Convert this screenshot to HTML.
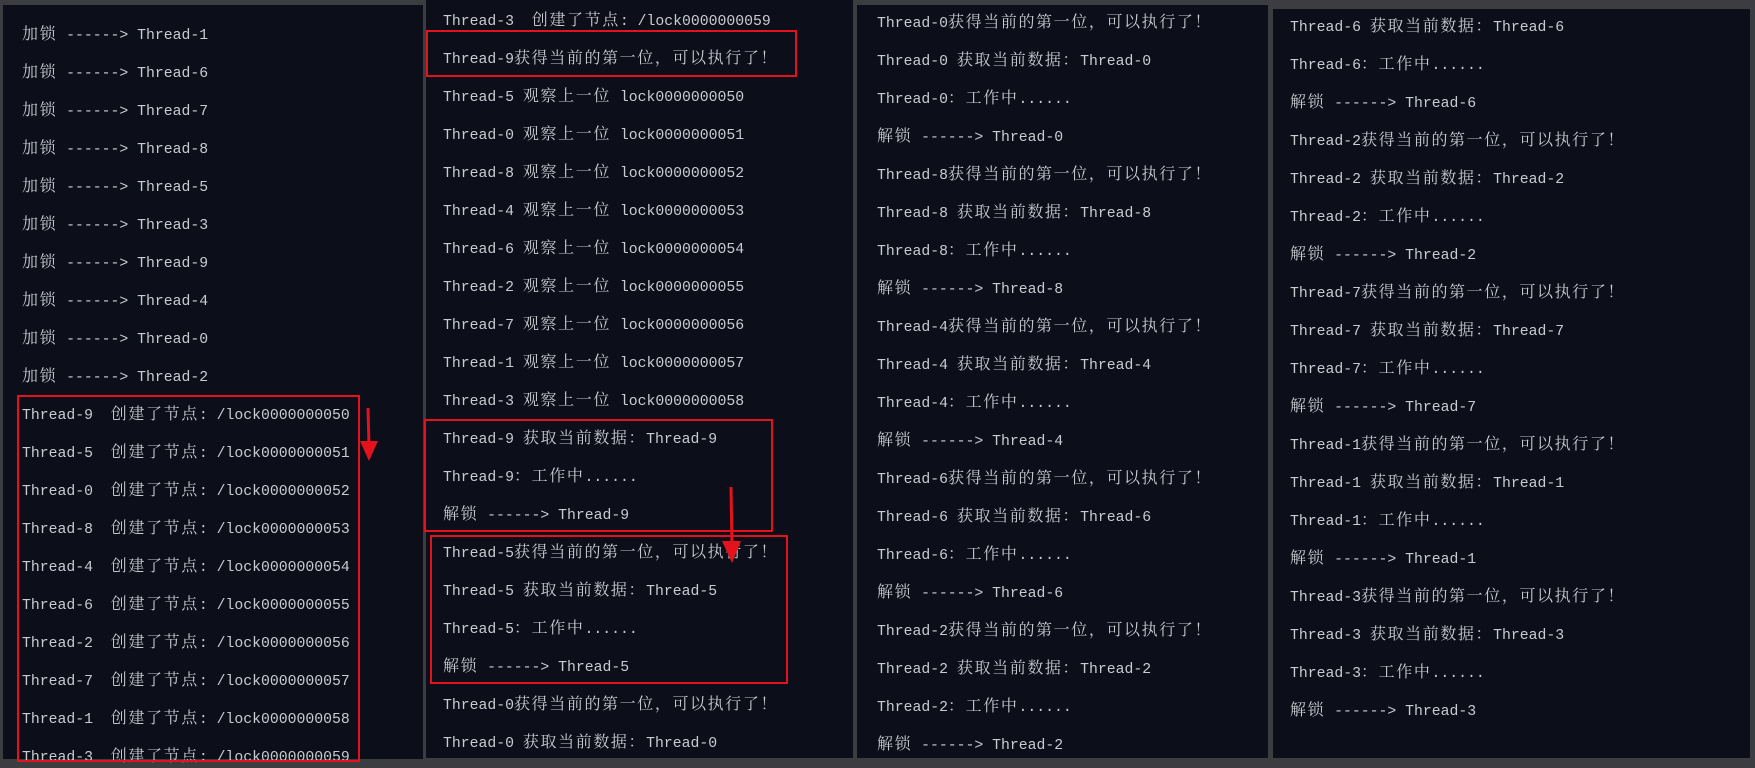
<!DOCTYPE html>
<html><head><meta charset="utf-8"><style>
html,body{margin:0;padding:0;width:1755px;height:766px;overflow:hidden;background:#3c3d40;}
.p{position:absolute;background:#0c0f1a;}
.r{position:absolute;white-space:pre;height:20px;line-height:20px;color:#c8cbd0;font-family:"Liberation Mono",monospace;font-size:14.8px;}
.c{font-family:"Noto Serif CJK SC","Noto Sans CJK SC",serif;font-size:16px;letter-spacing:1.6px;}
.b{position:absolute;border:2px solid #e3121c;box-sizing:border-box;}
</style></head><body>
<div class="p" style="left:3px;top:5px;width:420px;height:754px"></div>
<div class="p" style="left:426px;top:0px;width:427px;height:758px"></div>
<div class="p" style="left:857px;top:5px;width:411px;height:753px"></div>
<div class="p" style="left:1273px;top:9px;width:477px;height:749px"></div>
<div id="t"></div>
<div class="b" style="left:17px;top:395px;width:343px;height:367px"></div>
<div class="b" style="left:426px;top:30px;width:371px;height:47px"></div>
<div class="b" style="left:424px;top:419px;width:349px;height:113px"></div>
<div class="b" style="left:430px;top:535px;width:358px;height:149px"></div>
<svg style="position:absolute;left:0;top:0" width="1755" height="766">
<path d="M368 408 L369 446" stroke="#e3121c" stroke-width="3"/>
<path d="M360 441 L378 441 L369 461 Z" fill="#e3121c"/>
<path d="M731 487 L732 548" stroke="#e3121c" stroke-width="3"/>
<path d="M722 541 L741 541 L732 563 Z" fill="#e3121c"/>
</svg>
<script>
var cols=[
[22,33,["加锁 ------> Thread-1","加锁 ------> Thread-6","加锁 ------> Thread-7","加锁 ------> Thread-8","加锁 ------> Thread-5","加锁 ------> Thread-3","加锁 ------> Thread-9","加锁 ------> Thread-4","加锁 ------> Thread-0","加锁 ------> Thread-2",
"Thread-9  创建了节点: /lock0000000050","Thread-5  创建了节点: /lock0000000051","Thread-0  创建了节点: /lock0000000052","Thread-8  创建了节点: /lock0000000053","Thread-4  创建了节点: /lock0000000054","Thread-6  创建了节点: /lock0000000055","Thread-2  创建了节点: /lock0000000056","Thread-7  创建了节点: /lock0000000057","Thread-1  创建了节点: /lock0000000058","Thread-3  创建了节点: /lock0000000059"]],
[443,19,["Thread-3  创建了节点: /lock0000000059","Thread-9获得当前的第一位，可以执行了！","Thread-5 观察上一位 lock0000000050","Thread-0 观察上一位 lock0000000051","Thread-8 观察上一位 lock0000000052","Thread-4 观察上一位 lock0000000053","Thread-6 观察上一位 lock0000000054","Thread-2 观察上一位 lock0000000055","Thread-7 观察上一位 lock0000000056","Thread-1 观察上一位 lock0000000057","Thread-3 观察上一位 lock0000000058",
"Thread-9 获取当前数据：Thread-9","Thread-9：工作中......","解锁 ------> Thread-9","Thread-5获得当前的第一位，可以执行了！","Thread-5 获取当前数据：Thread-5","Thread-5：工作中......","解锁 ------> Thread-5","Thread-0获得当前的第一位，可以执行了！","Thread-0 获取当前数据：Thread-0"]],
[877,21,[]],[1290,25,[]]];
function grp(n){return ["Thread-"+n+"获得当前的第一位，可以执行了！","Thread-"+n+" 获取当前数据：Thread-"+n,"Thread-"+n+"：工作中......","解锁 ------> Thread-"+n];}
[0,8,4,6,2].forEach(function(n){cols[2][2]=cols[2][2].concat(grp(n));});
cols[3][2]=["Thread-6 获取当前数据：Thread-6","Thread-6：工作中......","解锁 ------> Thread-6"];
[2,7,1,3].forEach(function(n){cols[3][2]=cols[3][2].concat(grp(n));});
var h="";
cols.forEach(function(c){c[2].forEach(function(s,i){
var t=s.replace(/&/g,"&amp;").replace(/</g,"&lt;").replace(/>/g,"&gt;").replace(/([^\x00-\x7f]+)/g,'<span class="c">$1</span>');
h+='<div class="r" style="left:'+c[0]+'px;top:'+(c[1]+i*38-10)+'px">'+t+'</div>';});});
document.getElementById("t").innerHTML=h;
</script>
</body></html>
